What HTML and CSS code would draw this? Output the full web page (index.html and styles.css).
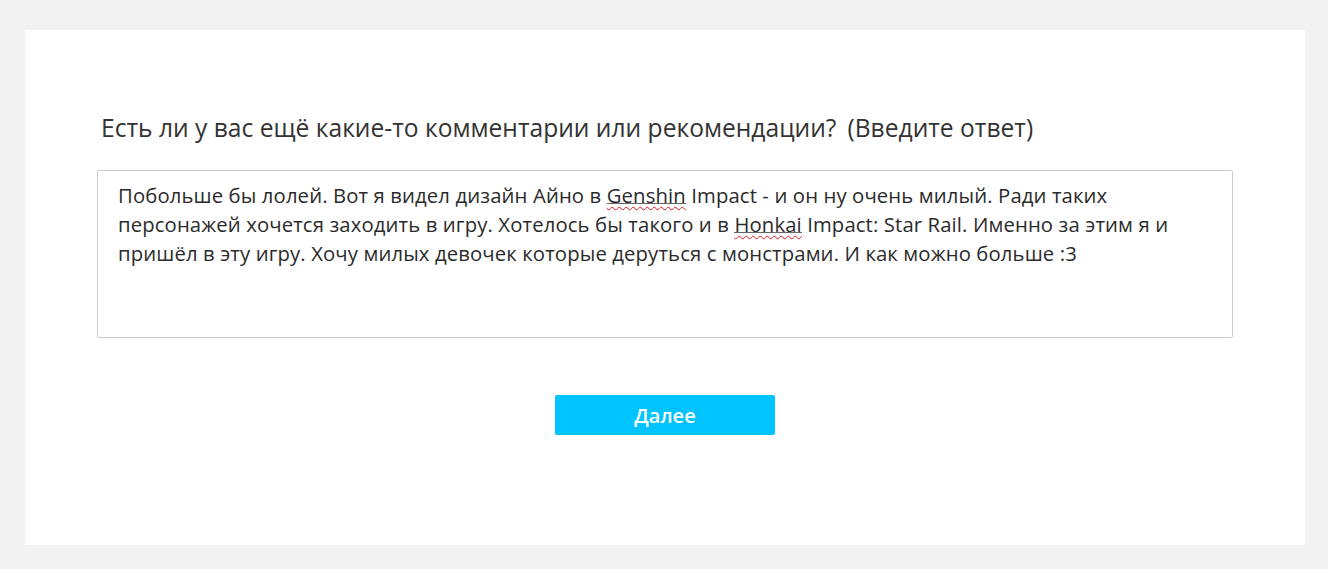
FILE: index.html
```html
<!DOCTYPE html>
<html lang="ru">
<head>
<meta charset="utf-8">
<link rel="stylesheet" href="styles.css">
</head>
<body>
<main class="card">
  <div class="question">
    <span class="q-text">Есть ли у вас ещё какие-то комментарии или рекомендации?</span>
    <span class="q-hint">(Введите ответ)</span>
  </div>
  <div class="answer">Побольше бы лолей. Вот я видел дизайн Айно в <span class="spell">Genshin</span> Impact - и он ну очень милый. Ради таких персонажей хочется заходить в игру. Хотелось бы такого и в <span class="spell">Honkai</span> Impact: Star Rail. Именно за этим я и пришёл в эту игру. Хочу милых девочек которые деруться с монстрами. И как можно больше :3</div>
  <div class="actions">
    <button class="next">Далее</button>
  </div>
</main>
</body>
</html>
```

FILE: styles.css
```css
html, body {
  margin: 0;
  padding: 0;
  background: #f2f2f2;
}
body {
  padding: 30px 23px 24px 25px;
  font-family: "Open Sans", "Noto Sans", sans-serif;
  color: #333;
}
.card {
  background: #fff;
  height: 515px;
  box-sizing: border-box;
  padding: 78px 72px 0 72px;
}
.question {
  font-size: 24.6px;
  line-height: 40px;
  padding-left: 4px;
  color: #333;
  display: flex;
  gap: 11px;
  white-space: nowrap;
}
.answer {
  margin-top: 22px;
  border: 1px solid #ccc;
  border-radius: 2px;
  height: 168px;
  box-sizing: border-box;
  padding: 10px 20px;
  font-size: 20.3px;
  line-height: 29px;
  letter-spacing: 0.12px;
  color: #2b2b2b;
}
.spell {
  text-decoration: underline wavy #e0161b;
  text-decoration-thickness: 1px;
  text-underline-offset: 3px;
  background: linear-gradient(#666, #666) no-repeat 0 calc(100% - 5px) / 100% 1px;
}
.actions {
  display: flex;
  justify-content: center;
  margin-top: 57px;
}
.next {
  width: 220px;
  height: 40px;
  border: none;
  border-radius: 2px;
  background: #00c3ff;
  color: #fff;
  font-family: inherit;
  font-size: 20px;
  font-weight: 600;
  cursor: pointer;
}
```
